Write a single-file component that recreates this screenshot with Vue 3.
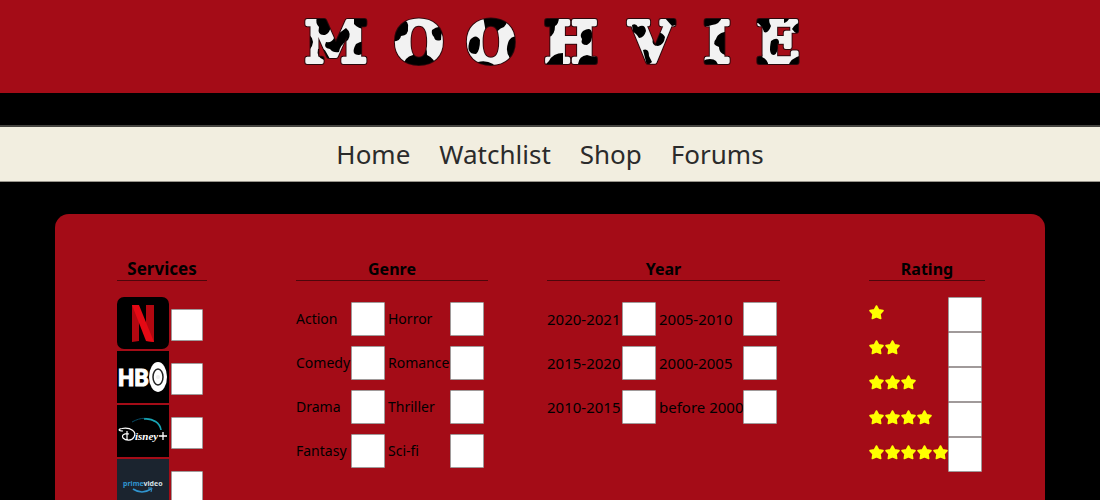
<script setup>
const letters = [
  { char: 'M', x: 46 },
  { char: 'O', x: 129 },
  { char: 'O', x: 201 },
  { char: 'H', x: 281 },
  { char: 'V', x: 361 },
  { char: 'I', x: 427 },
  { char: 'E', x: 488 },
]
const links = ['Home', 'Watchlist', 'Shop', 'Forums']
const services = ['Netflix', 'HBO', 'Disney+', 'Prime Video']
const genres = ['Action', 'Horror', 'Comedy', 'Romance', 'Drama', 'Thriller', 'Fantasy', 'Sci-fi']
const years = ['2020-2021', '2005-2010', '2015-2020', '2000-2005', '2010-2015', 'before 2000']
</script>

<template>
  <div class="page">
    <header class="banner">
      <svg class="wordmark" viewBox="0 -11 520 93" role="img" aria-label="MOOHVIE">
        <defs>
          <mask id="letterMask" maskUnits="userSpaceOnUse" x="0" y="-11" width="520" height="93">
            <text class="letters mask-letters" y="51" aria-hidden="true">
              <tspan v-for="(l, i) in letters" :key="i" :x="l.x">{{ l.char }}</tspan>
            </text>
          </mask>
        </defs>
        <text class="letters outline" y="51">
          <tspan v-for="(l, i) in letters" :key="i" :x="l.x">{{ l.char }}</tspan>
        </text>
        <g mask="url(#letterMask)">
          <rect width="520" height="60" fill="#f2f2f2" />
          <path d="M27 6h14v9q-1 7-6 9-8 1-6-8-4-4-2-10z" />
          <path d="M12 22q10 0 11 9-1 10-11 10z" />
          <path d="M64 6h28v7q-10-1-14 5-9 1-14-5z" />
          <path d="M36 31q6 1 8-4 6-6 12-10 6 5 2 12-8 5-9 12-6 1-9-3-7-1-4-7z" />
          <path d="M66 33q8-5 10 0-1 11-7 11-9 0-3-11z" />
          <path d="M28 38q6-2 8 3l4 7-6 1q-8-3-6-11z" />
          <path d="M99 30q-3-12 10-20 10-3 9 7 1 7-7 8-1 7-12 5z" />
          <path d="M113 56q1-10 10-12 1-9 8-9 7 1 6 9 9 4 8 12z" />
          <path d="M142 19q8-6 11 0-2 4-2 10-6 2-7-3-3-3-2-7z" />
          <path d="M193 5h19q8 6 2 11-8 2-7 10-9 2-11-4z" />
          <path d="M175 20q1-9 9-12 4 3-3 7-1 4-6 5z" />
          <path d="M180 29q6-7 10 0 0 11-4 14-11 0-6-14z" />
          <path d="M218 32q2-8 12-7v14l-10 8q-5-6-2-15z" />
          <path d="M188 51q8-2 15 2l4 5h-20z" />
          <path d="M250 5h19q0 8-4 10 0 9-6 11-2 10-9 8z" />
          <path d="M259 50q4-8 14-8v14h-20z" />
          <path d="M293 20q8-5 9 2 1 9-5 12-7 0-5-6-3-4 1-8z" />
          <path d="M288 53q1-8 9-9 7 3 16 1v12h-25z" />
          <path d="M342 14q4-2 6 2 7-4 8 4-2 7-7 7-3-5-6-6z" />
          <path d="M353 39q6-2 6 6l3 6-5 4z" />
          <path d="M363 27q5 0 5-6 5 1 7 5-1 8-7 9-7 0-5-8z" />
          <path d="M374 6h20v6q-7 2-12 3z" />
          <path d="M408 6h24q-2 7-10 8-8 3-14-1z" />
          <path d="M443 20q-15 0-17 8-5 5 3 8 0 9 14 9z" />
          <path d="M411 56q0-8 9-8 8 0 8 8z" />
          <path d="M460 6h20q-2 5 1 9-3 8-7 6-2-6-6-9h-8z" />
          <path d="M494 6h6q-2 5-6 6z" />
          <path d="M502 18q3-6 12-8v15q-8-1-12-7z" />
          <path d="M481 30q7-5 8 1-1 12-5 13-6 0-3-14z" />
          <path d="M462 42q12-3 10 4 7 3 6 10h-18z" />
          <path d="M498 56q2-9 14-12v12z" />
        </g>
      </svg>
    </header>

    <nav class="menu">
      <a v-for="link in links" :key="link" href="#">{{ link }}</a>
    </nav>

    <form class="panel">
      <section class="services">
        <h2>Services</h2>
        <label v-for="(name, i) in services" :key="name" class="service">
          <svg class="tile" viewBox="0 0 52 52" role="img" :aria-label="name">
            <template v-if="i === 0">
              <rect width="52" height="52" rx="7" fill="#000" />
              <path d="M15 8h7v36l-7 1zM29 8h8v37l-8-1z" fill="#b20710" />
              <path d="M15 8h7l15 37-8-1z" fill="#e50914" />
            </template>
            <template v-else-if="i === 1">
              <rect width="52" height="52" fill="#000" />
              <text class="hbo" x="1" y="35" aria-hidden="true">HB</text>
              <ellipse cx="41" cy="26" rx="9" ry="15" fill="#fff" />
              <ellipse cx="41" cy="26" rx="5" ry="8" fill="#fff" stroke="#222" stroke-width="1.5" />
              <circle cx="41" cy="26" r="2" fill="#eee" />
            </template>
            <template v-else-if="i === 2">
              <rect width="52" height="52" fill="#000" />
              <path d="M15 17C24 12 32 12 38 17" fill="none" stroke="#064a64" stroke-width="1" />
              <path d="M27 14C36 13 43 18 44 25" fill="none" stroke="#19a5b4" stroke-width="1.6" />
              <path d="M6 26C1 26 1 24 5 23.500C14 22 20 27 17 32C15 36 9 36 6 33C4 30 8 28 12 29M10 26v9" fill="none" stroke="#fff" stroke-width="1.2" />
              <text class="disney" x="18" y="35" aria-hidden="true">isney</text>
              <path d="M42 31h8M46 27v8" stroke="#fff" stroke-width="1.3" />
            </template>
            <template v-else>
              <rect width="52" height="52" fill="#1b242f" />
              <text class="prime" x="6" y="27" aria-hidden="true"><tspan fill="#3094cf">prime</tspan><tspan fill="#d5e0e8">video</tspan></text>
              <path d="M16 30Q25 36 34 30" fill="none" stroke="#3094cf" stroke-width="1.6" />
              <path d="M31 29l4 0-1 4" fill="none" stroke="#3094cf" stroke-width="1" />
            </template>
          </svg>
          <input type="checkbox" :aria-label="name" />
        </label>
      </section>

      <div class="middle">
        <section>
          <h2>Genre</h2>
          <div class="options genre">
            <label v-for="name in genres" :key="name">
              <span>{{ name }}</span><input type="checkbox" />
            </label>
          </div>
        </section>
        <section>
          <h2>Year</h2>
          <div class="options year">
            <label v-for="name in years" :key="name">
              <span>{{ name }}</span><input type="checkbox" />
            </label>
          </div>
        </section>
      </div>

      <section class="rating">
        <h2>Rating</h2>
        <label v-for="n in 5" :key="n" class="rate">
          <span class="stars">
            <svg v-for="s in n" :key="s" viewBox="0 0 15 15" aria-hidden="true">
              <path d="M7.500 1L9.600 4.800 14 5.600 11 9 11.700 13.500 7.500 11.700 3.300 13.500 4 9 1 5.600 5.400 4.800z" fill="#ff0" stroke="#ff0" stroke-width="1.6" stroke-linejoin="round" />
            </svg>
          </span>
          <input type="checkbox" :aria-label="n + ' stars'" />
        </label>
      </section>
    </form>
  </div>
</template>

<style>
body {
  margin: 0;
  background: #000;
}
</style>

<style scoped>
.page {
  height: 100vh;
  overflow-y: auto;
  scrollbar-width: none;
  background: #000;
  color: #000;
  font-family: "Noto Sans", "Open Sans", sans-serif;
}
.banner {
  display: flex;
  justify-content: center;
  background: #a40c17;
}
.wordmark {
  display: block;
  width: 520px;
  height: 93px;
}
.letters {
  font-family: "DejaVu Serif", serif;
  font-size: 56px;
  font-weight: 700;
  text-anchor: middle;
  stroke-linejoin: round;
}
.outline {
  fill: #000;
  stroke: #2b080c;
  stroke-width: 6px;
}
.mask-letters {
  fill: #fff;
  stroke: #fff;
  stroke-width: 4px;
}
.menu {
  display: flex;
  justify-content: center;
  gap: 29px;
  margin: 32px 0;
  border-top: 2px solid #454440;
  border-bottom: 1px solid #99958c;
  background: #f2eee0;
  line-height: 54px;
  font-size: 26px;
}
.menu a {
  color: #2b2b2b;
  text-decoration: none;
}
.panel {
  display: flex;
  justify-content: space-between;
  margin: 0 5%;
  padding: 44px 60px 44px 62px;
  border-radius: 14px;
  background: #a40c17;
}
h2 {
  margin: 0 0 16px;
  border-bottom: 1px solid #4d060b;
  font-size: 16px;
  line-height: 22px;
  text-align: center;
}
.services {
  width: 90px;
}
.services h2 {
  font-size: 17px;
}
.service {
  display: flex;
  align-items: center;
  gap: 2px;
  height: 52px;
  margin-bottom: 2px;
}
.tile {
  width: 52px;
  height: 52px;
}
.hbo {
  fill: #fff;
  stroke: #fff;
  font: 700 23px Roboto, "Liberation Sans", sans-serif;
}
.disney {
  fill: #fff;
  font: italic 700 11px "Liberation Serif", serif;
}
.prime {
  font: 700 7px "Noto Sans", sans-serif;
}
input {
  appearance: none;
  flex: none;
  box-sizing: border-box;
  width: 34px;
  height: 34px;
  margin: 0;
  border: 1px solid #a09a9a;
  border-radius: 1px;
  background: #fff;
}
input:checked {
  background: #3274d8;
}
.service input {
  width: 32px;
  height: 32px;
  margin-top: 4px;
}
.middle {
  display: flex;
  gap: 59px;
}
.options {
  display: grid;
  row-gap: 10px;
  column-gap: 3px;
  padding-top: 5px;
}
.options label {
  display: flex;
  align-items: center;
  justify-content: space-between;
  white-space: nowrap;
}
.genre {
  grid-template-columns: 89px 96px;
  padding-right: 4px;
  font-size: 14px;
}
.year {
  grid-template-columns: 109px 118px;
  padding-right: 3px;
  font-size: 15px;
}
.options span {
  min-width: 0;
  line-height: 20px;
}
.rating {
  width: 116px;
}
.rate {
  display: flex;
  align-items: flex-start;
  height: 35px;
}
.rate input {
  height: 35px;
}
.stars {
  display: flex;
  gap: 1px;
  width: 79px;
  padding: 8px 0;
}
.stars svg {
  width: 15px;
  height: 15px;
}
</style>
